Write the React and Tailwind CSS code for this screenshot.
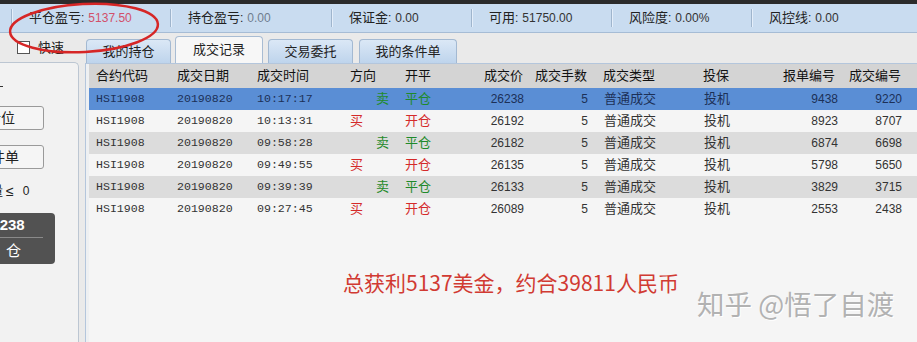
import React from "react";

const stats = [
  { label: "平仓盈亏", value: "5137.50", w: "w-[159px]", color: "text-[#d2506a]" },
  { label: "持仓盈亏", value: "0.00", w: "w-[161px]", color: "text-[#6f7d8e]" },
  { label: "保证金", value: "0.00", w: "w-[140px]", color: "text-[#333]" },
  { label: "可用", value: "51750.00", w: "w-[140px]", color: "text-[#333]" },
  { label: "风险度", value: "0.00%", w: "w-[140px]", color: "text-[#333]" },
  { label: "风控线", value: "0.00", w: "w-[166px]", color: "text-[#333]" },
];

const trades = [
  { time: "10:17:17", dir: "卖", price: "26238", order: "9438", trade: "9220" },
  { time: "10:13:31", dir: "买", price: "26192", order: "8923", trade: "8707" },
  { time: "09:58:28", dir: "卖", price: "26182", order: "6874", trade: "6698" },
  { time: "09:49:55", dir: "买", price: "26135", order: "5798", trade: "5650" },
  { time: "09:39:39", dir: "卖", price: "26133", order: "3829", trade: "3715" },
  { time: "09:27:45", dir: "买", price: "26089", order: "2553", trade: "2438" },
];

const rowBg = ["bg-[#5a8ed5]", "bg-[#f5f5f5]", "bg-[#dcdcdc]", "bg-[#f5f5f5]", "bg-[#dcdcdc]", "bg-[#f5f5f5]"];

const mono = "font-['Liberation_Mono',monospace] text-[11.6px]";
const num = "font-['Liberation_Sans',sans-serif] text-[12px]";

function Tab({ label, active, className }) {
  if (active) {
    return (
      <div className={`h-[27px] flex items-center justify-center rounded-t-[4px] border border-b-0 border-[#a8bcd3] bg-[#f7f7f7] text-[13px] text-[#222] ${className}`}>
        {label}
      </div>
    );
  }
  return (
    <div className={`h-[24px] flex items-center justify-center rounded-t-[4px] border border-b-0 border-[#a3b9d2] bg-gradient-to-b from-[#dbe8f6] to-[#bed4ec] text-[13px] text-[#222] ${className}`}>
      {label}
    </div>
  );
}

export default function App() {
  return (
    <div className="relative w-[917px] h-[342px] overflow-hidden bg-[#eaeaea] font-['Liberation_Sans','Noto_Sans_CJK_SC',sans-serif] text-[#222]">
      {/* window top edge */}
      <div className="h-[4px] bg-[#2b2b2b]" />

      {/* account summary bar */}
      <div className="h-[29px] flex items-center pl-[11px] bg-[#c9dcf0] border-b border-[#a6bcd5]">
        {stats.map((s) => (
          <div key={s.label} className={`${s.w} flex items-center h-full`}>
            <div className="w-px h-[18px] bg-[#9fb5cd] shadow-[1px_0_0_#e4eefa]" />
            <span className="ml-[17px] text-[13px] text-[#222]">{s.label}</span>
            <span className="text-[12px] text-[#222]">:</span>
            <span className={`ml-[4px] ${num} ${s.color}`}>{s.value}</span>
          </div>
        ))}
      </div>

      <div className="flex h-[309px]">
        {/* left side panel, scrolled so its left part is hidden */}
        <div className="w-[85px] flex flex-col">
          <div className="h-[29px] flex items-center pl-[17px]">
            <div className="w-[13px] h-[13px] border border-[#555] bg-white" />
            <span className="ml-[8px] text-[13px] text-[#222]">快速</span>
          </div>
          <div className="w-[79px] flex-1 bg-[#f2f2f2] border-t border-r border-[#bcc6d2] rounded-tr-[5px] overflow-hidden">
            <div className="mt-[23px] w-[3px] h-px bg-[#333]" />
            <button className="mt-[19px] -ml-[20px] w-[64px] h-[24px] flex items-center pl-[6px] border border-[#9a9a9a] rounded-[3px] bg-[#f5f5f5] text-[14px] text-[#222] whitespace-nowrap">
              仓位
            </button>
            <button className="mt-[15px] -ml-[20px] w-[64px] h-[24px] flex items-center pl-[10px] border border-[#9a9a9a] rounded-[3px] bg-[#f5f5f5] text-[14px] text-[#222] whitespace-nowrap">
              件单
            </button>
            <div className="mt-[14px] -ml-[10px] flex items-center h-[16px] text-[13px] text-[#222] whitespace-nowrap">
              <span>量</span>
              <span className="ml-[3px] text-[14px]">≤</span>
              <span className={`ml-[9px] ${num}`}>0</span>
            </div>
            <div className="mt-[14px] w-[55px] h-[51px] bg-[#525252] rounded-r-[4px] overflow-hidden">
              <div className="h-[24px] flex items-center -ml-[17px] text-[15px] font-bold text-white">26238</div>
              <div className="w-[43px] h-px bg-[#8a8a8a]" />
              <div className="h-[26px] flex items-center pl-[6px] text-[15px] text-white">仓</div>
            </div>
          </div>
        </div>

        {/* tabs + trade list */}
        <div className="flex-1 flex flex-col">
          <div className="h-[30px] flex items-end pl-[1px]">
            <Tab label="我的持仓" className="w-[85px]" />
            <Tab label="成交记录" active className="ml-[4px] w-[88px]" />
            <Tab label="交易委托" className="ml-[5px] w-[85px]" />
            <Tab label="我的条件单" className="ml-[6px] w-[98px]" />
          </div>
          <div className="flex-1 border-t border-l border-[#b4c6dc] pl-[3px] bg-[#eef0f2]">
            <div className="h-full bg-[#f5f5f5]">
              {/* header */}
              <div className="h-[24px] flex items-center bg-[#d4d4d4] text-[13px] text-[#111] whitespace-nowrap">
                <div className="w-[88px] pl-[7px]">合约代码</div>
                <div className="w-[80px]">成交日期</div>
                <div className="w-[93px]">成交时间</div>
                <div className="w-[55px]">方向</div>
                <div className="w-[55px]">开平</div>
                <div className="w-[63px] text-right">成交价</div>
                <div className="w-[64px] text-right">成交手数</div>
                <div className="w-[116px] pl-[16px]">成交类型</div>
                <div className="w-[80px]">投保</div>
                <div className="w-[52px] text-right">报单编号</div>
                <div className="w-[66px] text-right">成交编号</div>
              </div>

              {trades.map((t, i) => {
                const buy = t.dir === "买";
                const sel = i === 0;
                const ink = sel ? "text-[#1c3057]" : "text-[#333]";
                return (
                  <div key={t.time} className={`h-[22px] flex items-center whitespace-nowrap ${rowBg[i]} ${ink}`}>
                    <div className={`w-[88px] pl-[7px] ${mono}`}>HSI1908</div>
                    <div className={`w-[80px] ${mono}`}>20190820</div>
                    <div className={`w-[93px] ${mono}`}>{t.time}</div>
                    <div className={`w-[55px] text-[13px] ${buy ? "text-[#d42a2a]" : "pl-[26px] text-[#1f8a2a]"}`}>{t.dir}</div>
                    <div className={`w-[55px] text-[13px] ${buy ? "text-[#d42a2a]" : "text-[#1f8a2a]"}`}>{buy ? "开仓" : "平仓"}</div>
                    <div className={`w-[64px] text-right ${num}`}>{t.price}</div>
                    <div className={`w-[64px] text-right ${num}`}>5</div>
                    <div className="w-[116px] pl-[16px] text-[13px]">普通成交</div>
                    <div className="w-[80px] text-[13px]">投机</div>
                    <div className={`w-[54px] text-right ${num}`}>{t.order}</div>
                    <div className={`w-[64px] text-right ${num}`}>{t.trade}</div>
                  </div>
                );
              })}

              <div className="mt-[48px] pl-[254px] h-[30px] flex items-center text-[21px] text-[#d13a32] font-['Noto_Sans_CJK_SC',sans-serif] whitespace-nowrap">
                总获利5137美金，约合39811人民币
              </div>
            </div>
          </div>
        </div>
      </div>

      {/* watermark */}
      <div className="absolute left-[697px] top-[283px] text-[27.5px] text-[#b2b2b2] font-['Noto_Sans_CJK_SC',sans-serif] [text-shadow:1px_1px_0_#ffffff] whitespace-nowrap pointer-events-none">
        知乎 @悟了自渡
      </div>

      {/* hand-drawn annotation */}
      <svg className="absolute left-0 top-0 pointer-events-none" width="200" height="70" viewBox="0 0 200 70">
        <ellipse cx="84" cy="28" rx="74" ry="24" transform="rotate(-3 84 28)" fill="none" stroke="#d62626" strokeWidth="2.5" />
      </svg>
    </div>
  );
}
